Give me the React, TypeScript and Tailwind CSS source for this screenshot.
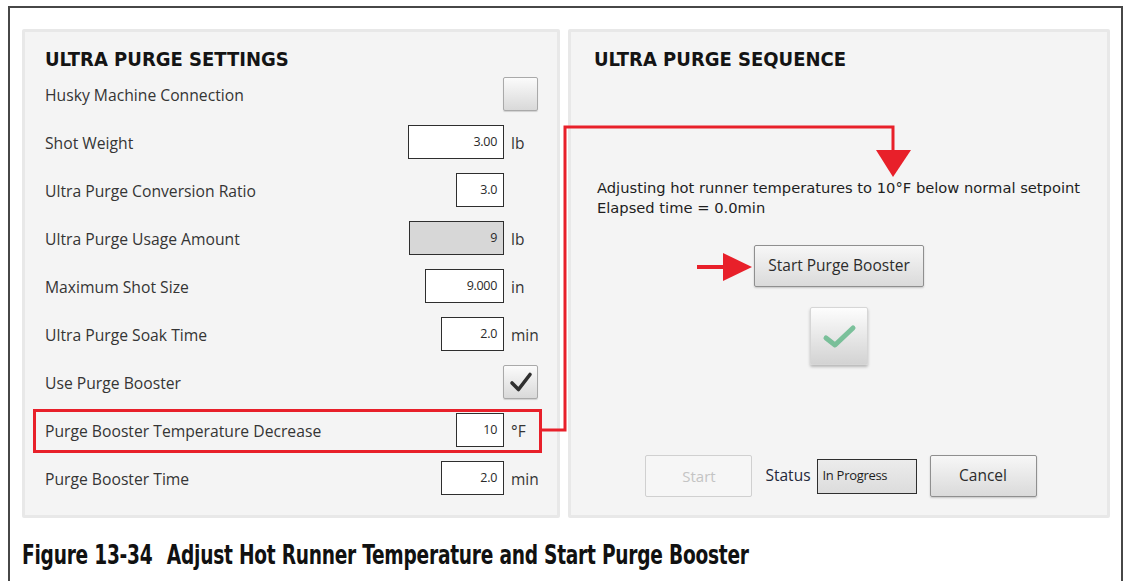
import React from "react";

type Row =
  | { label: string; kind: "check"; checked: boolean }
  | { label: string; kind: "input"; value: string; unit: string; w: string; disabled?: boolean };

const rows: Row[] = [
  { label: "Husky Machine Connection", kind: "check", checked: false },
  { label: "Shot Weight", kind: "input", value: "3.00", unit: "lb", w: "w-[96px]" },
  { label: "Ultra Purge Conversion Ratio", kind: "input", value: "3.0", unit: "", w: "w-[48px]" },
  { label: "Ultra Purge Usage Amount", kind: "input", value: "9", unit: "lb", w: "w-[95px]", disabled: true },
  { label: "Maximum Shot Size", kind: "input", value: "9.000", unit: "in", w: "w-[79px]" },
  { label: "Ultra Purge Soak Time", kind: "input", value: "2.0", unit: "min", w: "w-[63px]" },
  { label: "Use Purge Booster", kind: "check", checked: true },
  { label: "Purge Booster Temperature Decrease", kind: "input", value: "10", unit: "°F", w: "w-[48px]" },
  { label: "Purge Booster Time", kind: "input", value: "2.0", unit: "min", w: "w-[63px]" },
];

const openSans = "font-['Open_Sans',sans-serif]";
const tahomaBold = "font-['DejaVu_Sans_Condensed','DejaVu_Sans',sans-serif] font-bold";
const tahoma = "font-['DejaVu_Sans',sans-serif]";

function CheckBox({ checked }: { checked: boolean }) {
  return (
    <div className="w-[35px] h-[34px] rounded-[2px] border border-[#a9a9a9] bg-gradient-to-b from-[#fbfbfb] to-[#d9d9d9] shadow-[0_1px_1px_rgba(0,0,0,0.15)] flex items-center justify-center">
      {checked && (
        <svg width="24" height="22" viewBox="0 0 24 22">
          <path d="M3 12 L9.5 18.5 L21 3.5" fill="none" stroke="#2f2f2f" strokeWidth="3.6" strokeLinecap="round" strokeLinejoin="round" />
        </svg>
      )}
    </div>
  );
}

function SettingRow({ row }: { row: Row }) {
  return (
    <div className="h-[48px] flex items-center justify-between">
      <span className={`pt-[4px] ${openSans} text-[15.7px] text-[#353535]`}>{row.label}</span>
      {row.kind === "check" ? (
        <CheckBox checked={row.checked} />
      ) : (
        <div className="flex items-center">
          <div
            className={`${row.w} h-[34px] border border-[#2e2e2e] flex items-center justify-end pr-[6px] ${openSans} text-[12.5px] tracking-[-0.3px] text-[#2a2a2a] ${
              row.disabled ? "bg-[#d7d7d7]" : "bg-white"
            }`}
          >
            {row.value}
          </div>
          <span className={`w-[34px] pl-[7px] pt-[3px] ${openSans} text-[15.5px] text-[#353535]`}>{row.unit}</span>
        </div>
      )}
    </div>
  );
}

export default function App() {
  return (
    <div className="relative w-[1125px] h-[581px] bg-white overflow-hidden">
      <div className="ml-[8px] mt-[6px] w-[1115px] h-[620px] border-2 border-b-0 border-[#474747]">
        <div className="flex gap-[8px] pl-[12px] pt-[21px]">
          {/* Left panel */}
          <div className="w-[538px] h-[489px] bg-[#f4f4f4] border-[3px] border-[#e8e8e8] rounded-[2px] pl-[20px] pr-[19px] pt-[15px]">
            <div className={`h-[23px] flex items-center ${tahomaBold} text-[20px] text-[#141414]`}>
              ULTRA PURGE SETTINGS
            </div>
            <div>
              {rows.map((r) => (
                <SettingRow key={r.label} row={r} />
              ))}
            </div>
          </div>

          {/* Right panel */}
          <div className="w-[542px] h-[489px] bg-[#f4f4f4] border-[3px] border-[#e8e8e8] rounded-[2px] pt-[15px] pb-[18px] flex flex-col">
            <div className={`pl-[23px] h-[23px] flex items-center ${tahomaBold} text-[20px] text-[#141414]`}>
              ULTRA PURGE SEQUENCE
            </div>
            <div className={`mt-[108px] pl-[26px] ${tahoma} text-[14.7px] leading-[20px] text-[#1e1e1e]`}>
              <div>Adjusting hot runner temperatures to 10°F below normal setpoint</div>
              <div>Elapsed time = 0.0min</div>
            </div>
            <div className="mt-[27px] flex justify-center">
              <div
                className={`w-[170px] h-[42px] rounded-[2px] border border-[#8f8f8f] bg-gradient-to-b from-[#f7f7f7] to-[#dadada] shadow-[0_1px_2px_rgba(0,0,0,0.2)] flex items-center justify-center ${openSans} text-[15.5px] text-[#2c2c2c]`}
              >
                Start Purge Booster
              </div>
            </div>
            <div className="mt-[20px] flex justify-center">
              <div className="w-[58px] h-[58px] rounded-[2px] border border-[#d6d6d6] bg-gradient-to-b from-[#fdfdfd] to-[#d3d3d3] shadow-[0_2px_3px_rgba(0,0,0,0.25)] flex items-center justify-center">
                <svg width="40" height="32" viewBox="0 0 40 32">
                  <path d="M7 18 L16 25 L34 8" fill="none" stroke="#66b88c" strokeOpacity="0.85" strokeWidth="5" strokeLinecap="round" strokeLinejoin="round" />
                </svg>
              </div>
            </div>
            <div className="flex-1" />
            <div className="flex items-center justify-center pl-[4px]">
              <div className={`w-[107px] h-[42px] rounded-[2px] border border-[#d0d0d0] bg-[#f6f6f6] flex items-center justify-center ${openSans} text-[15px] text-[#c4c4c4]`}>
                Start
              </div>
              <span className={`ml-[13px] ${openSans} text-[15.5px] text-[#24283a]`}>Status</span>
              <div className={`ml-[6px] w-[100px] h-[35px] border-[1.5px] border-[#2e2e2e] bg-gradient-to-b from-[#ececec] to-[#dcdcdc] flex items-center pl-[5px] ${openSans} text-[13px] tracking-[-0.3px] text-[#1e1e1e]`}>
                In Progress
              </div>
              <div className={`ml-[13px] w-[107px] h-[42px] rounded-[2px] border border-[#8f8f8f] bg-gradient-to-b from-[#f7f7f7] to-[#dadada] shadow-[0_1px_2px_rgba(0,0,0,0.2)] flex items-center justify-center ${openSans} text-[15.5px] text-[#2c2c2c]`}>
                Cancel
              </div>
            </div>
          </div>
        </div>

        {/* Caption */}
        <div className="mt-[20px] pl-[12px] h-[34px]">
          <div className="flex items-center h-[34px] origin-left scale-x-[0.795] whitespace-nowrap font-['DejaVu_Sans_Condensed',sans-serif] font-bold text-[26px] text-[#111] tracking-[-0.3px]">
            <span>Figure 13-34</span>
            <span className="ml-[18px]">Adjust Hot Runner Temperature and Start Purge Booster</span>
          </div>
        </div>
      </div>

      {/* Red annotations */}
      <svg className="absolute left-0 top-0 pointer-events-none" width="1125" height="581" viewBox="0 0 1125 581">
        <rect x="34.5" y="410.5" width="506" height="41" fill="none" stroke="#e8202a" strokeWidth="3" />
        <polyline points="542,430 565,430 565,127 893,127 893,152" fill="none" stroke="#e8202a" strokeWidth="3" />
        <polygon points="876,150 911,150 893,177" fill="#e8202a" />
        <line x1="697" y1="267" x2="726" y2="267" stroke="#e8202a" strokeWidth="4" />
        <polygon points="723,253 752,267 723,281" fill="#e8202a" />
      </svg>
    </div>
  );
}
